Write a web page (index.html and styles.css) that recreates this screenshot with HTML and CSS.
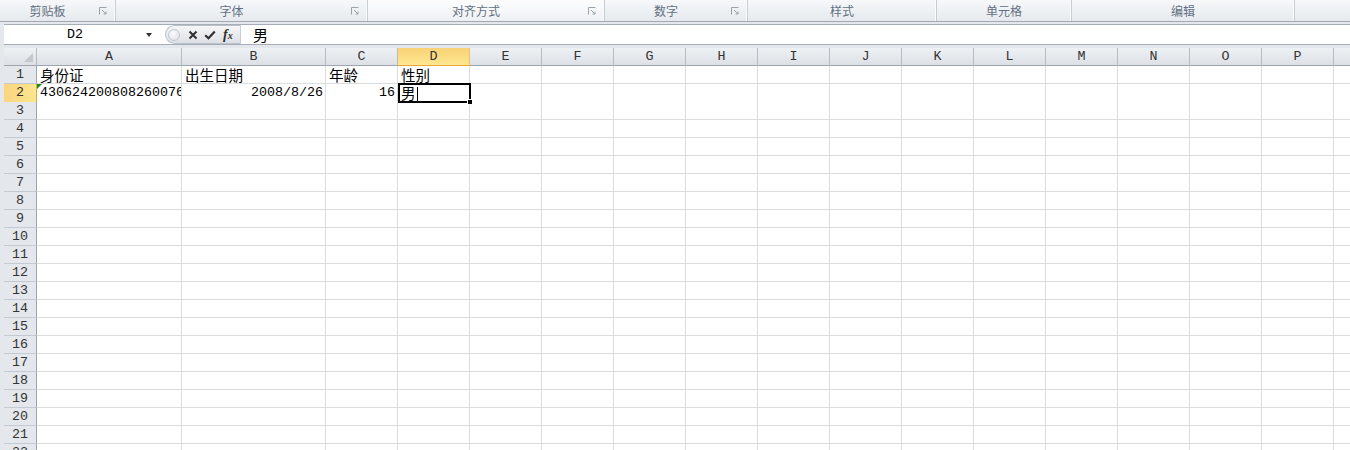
FILE: index.html
```html
<!DOCTYPE html>
<html lang="zh-CN">
<head>
    <meta charset="UTF-8">
    <meta name="viewport" content="width=device-width, initial-scale=1.0">
    <title>工作簿1 - Microsoft Excel</title>
    <link rel="stylesheet" href="styles.css">
</head>
<body>

<!-- 功能区分组标题 -->
<div class="ribbon">
    <div class="group g-clip"><span class="label">剪贴板</span><svg class="launcher" width="8" height="8" viewBox="0 0 8 8"><path d="M0.5 7.5V0.5H7.5" /><path d="M3 3L7 7M7 4.5V7H4.5" /></svg></div>
    <div class="group g-font"><span class="label">字体</span><svg class="launcher" width="8" height="8" viewBox="0 0 8 8"><path d="M0.5 7.5V0.5H7.5" /><path d="M3 3L7 7M7 4.5V7H4.5" /></svg></div>
    <div class="group g-align hover"><span class="label">对齐方式</span><svg class="launcher" width="8" height="8" viewBox="0 0 8 8"><path d="M0.5 7.5V0.5H7.5" /><path d="M3 3L7 7M7 4.5V7H4.5" /></svg></div>
    <div class="group g-num"><span class="label">数字</span><svg class="launcher" width="8" height="8" viewBox="0 0 8 8"><path d="M0.5 7.5V0.5H7.5" /><path d="M3 3L7 7M7 4.5V7H4.5" /></svg></div>
    <div class="group g-style"><span class="label">样式</span></div>
    <div class="group g-cells"><span class="label">单元格</span></div>
    <div class="group g-edit"><span class="label">编辑</span></div>
    <div class="group last"></div>
</div>

<!-- 编辑栏 -->
<div class="fbar">
    <div class="namebox"><span class="name">D2</span><span class="drop"></span></div>
    <div class="fbtns">
        <span class="grip"></span>
        <svg class="cancel" width="10" height="10" viewBox="0 0 10 10"><path d="M1.5 1.5L8.5 8.5M8.5 1.5L1.5 8.5" /></svg>
        <svg class="enter" width="12" height="10" viewBox="0 0 12 10"><path d="M1.2 5.2L4.5 8.3L10.8 1.5" /></svg>
        <span class="fx"><i>f</i><small>x</small></span>
    </div>
    <div class="formula">男</div>
</div>

<!-- 工作表 -->
<div class="sheet">
    <div class="row head"><span class="corner"><svg width="33" height="17" viewBox="0 0 33 17"><polygon points="29,5 29,14 20,14" /></svg></span><span>A</span><span>B</span><span>C</span><span class="sel">D</span><span>E</span><span>F</span><span>G</span><span>H</span><span>I</span><span>J</span><span>K</span><span>L</span><span>M</span><span>N</span><span>O</span><span>P</span><span></span></div>
    <div class="row"><span class="rh">1</span><span class="t">身份证</span><span class="t">出生日期</span><span class="t">年龄</span><span class="t">性别</span><span></span><span></span><span></span><span></span><span></span><span></span><span></span><span></span><span></span><span></span><span></span><span></span><span></span></div>
    <div class="row"><span class="rh sel">2</span><span class="err">430624200808260076</span><span class="num">2008/8/26</span><span class="num">16</span><span class="t active">男<i class="caret"></i><b class="box"><b class="handle"></b></b></span><span></span><span></span><span></span><span></span><span></span><span></span><span></span><span></span><span></span><span></span><span></span><span></span><span></span></div>
    <div class="row"><span class="rh">3</span><span></span><span></span><span></span><span></span><span></span><span></span><span></span><span></span><span></span><span></span><span></span><span></span><span></span><span></span><span></span><span></span><span></span></div>
    <div class="row"><span class="rh">4</span><span></span><span></span><span></span><span></span><span></span><span></span><span></span><span></span><span></span><span></span><span></span><span></span><span></span><span></span><span></span><span></span><span></span></div>
    <div class="row"><span class="rh">5</span><span></span><span></span><span></span><span></span><span></span><span></span><span></span><span></span><span></span><span></span><span></span><span></span><span></span><span></span><span></span><span></span><span></span></div>
    <div class="row"><span class="rh">6</span><span></span><span></span><span></span><span></span><span></span><span></span><span></span><span></span><span></span><span></span><span></span><span></span><span></span><span></span><span></span><span></span><span></span></div>
    <div class="row"><span class="rh">7</span><span></span><span></span><span></span><span></span><span></span><span></span><span></span><span></span><span></span><span></span><span></span><span></span><span></span><span></span><span></span><span></span><span></span></div>
    <div class="row"><span class="rh">8</span><span></span><span></span><span></span><span></span><span></span><span></span><span></span><span></span><span></span><span></span><span></span><span></span><span></span><span></span><span></span><span></span><span></span></div>
    <div class="row"><span class="rh">9</span><span></span><span></span><span></span><span></span><span></span><span></span><span></span><span></span><span></span><span></span><span></span><span></span><span></span><span></span><span></span><span></span><span></span></div>
    <div class="row"><span class="rh">10</span><span></span><span></span><span></span><span></span><span></span><span></span><span></span><span></span><span></span><span></span><span></span><span></span><span></span><span></span><span></span><span></span><span></span></div>
    <div class="row"><span class="rh">11</span><span></span><span></span><span></span><span></span><span></span><span></span><span></span><span></span><span></span><span></span><span></span><span></span><span></span><span></span><span></span><span></span><span></span></div>
    <div class="row"><span class="rh">12</span><span></span><span></span><span></span><span></span><span></span><span></span><span></span><span></span><span></span><span></span><span></span><span></span><span></span><span></span><span></span><span></span><span></span></div>
    <div class="row"><span class="rh">13</span><span></span><span></span><span></span><span></span><span></span><span></span><span></span><span></span><span></span><span></span><span></span><span></span><span></span><span></span><span></span><span></span><span></span></div>
    <div class="row"><span class="rh">14</span><span></span><span></span><span></span><span></span><span></span><span></span><span></span><span></span><span></span><span></span><span></span><span></span><span></span><span></span><span></span><span></span><span></span></div>
    <div class="row"><span class="rh">15</span><span></span><span></span><span></span><span></span><span></span><span></span><span></span><span></span><span></span><span></span><span></span><span></span><span></span><span></span><span></span><span></span><span></span></div>
    <div class="row"><span class="rh">16</span><span></span><span></span><span></span><span></span><span></span><span></span><span></span><span></span><span></span><span></span><span></span><span></span><span></span><span></span><span></span><span></span><span></span></div>
    <div class="row"><span class="rh">17</span><span></span><span></span><span></span><span></span><span></span><span></span><span></span><span></span><span></span><span></span><span></span><span></span><span></span><span></span><span></span><span></span><span></span></div>
    <div class="row"><span class="rh">18</span><span></span><span></span><span></span><span></span><span></span><span></span><span></span><span></span><span></span><span></span><span></span><span></span><span></span><span></span><span></span><span></span><span></span></div>
    <div class="row"><span class="rh">19</span><span></span><span></span><span></span><span></span><span></span><span></span><span></span><span></span><span></span><span></span><span></span><span></span><span></span><span></span><span></span><span></span><span></span></div>
    <div class="row"><span class="rh">20</span><span></span><span></span><span></span><span></span><span></span><span></span><span></span><span></span><span></span><span></span><span></span><span></span><span></span><span></span><span></span><span></span><span></span></div>
    <div class="row"><span class="rh">21</span><span></span><span></span><span></span><span></span><span></span><span></span><span></span><span></span><span></span><span></span><span></span><span></span><span></span><span></span><span></span><span></span><span></span></div>
    <div class="row"><span class="rh">22</span><span></span><span></span><span></span><span></span><span></span><span></span><span></span><span></span><span></span><span></span><span></span><span></span><span></span><span></span><span></span><span></span><span></span></div>
</div>

</body>
</html>
```

FILE: styles.css
```css
html, body {
    margin: 0;
    height: 100%;
    overflow: hidden;
}
body {
    background-color: #e4e8ec;
    font-family: "Liberation Mono", "Noto Sans CJK SC", monospace;
    font-size: 13px;
    color: #000;
}

/* 功能区 */
.ribbon {
    display: flex;
    height: 21px;
    border-bottom: 1px solid #a2a9b2;
    background: linear-gradient(#f6f8fa, #e6eaee);
    font-family: "Noto Sans CJK SC", sans-serif;
    font-size: 12px;
    color: #637083;
}
.group {
    display: flex;
    align-items: center;
    flex-shrink: 0;
    box-sizing: border-box;
    border-right: 1px solid #c6ccd3;
    box-shadow: inset -1px 0 #fbfcfd;
}
.group .label {
    flex: 1;
    text-align: center;
    line-height: 21px;
}
.group.hover {
    background: linear-gradient(#fdfdfe, #eef1f4);
}
.g-clip { width: 116px; }
.g-font { width: 252px; }
.g-align { width: 237px; }
.g-num { width: 143px; }
.g-style { width: 189px; }
.g-cells { width: 135px; }
.g-edit { width: 223px; }
.group.last {
    flex: 1;
    border-right: none;
    box-shadow: none;
}
.launcher {
    margin: 0 8px 0 4px;
    fill: none;
    stroke: #9aa2ac;
    stroke-width: 1;
}

/* 编辑栏 */
.fbar {
    display: flex;
    height: 19px;
    margin: 2px 0 3px 4px;
    background-color: #fff;
    border-top: 1px solid #a6adb6;
    border-bottom: 1px solid #a6adb6;
}
.namebox {
    display: flex;
    align-items: center;
    width: 156px;
    flex-shrink: 0;
}
.name {
    width: 142px;
    text-align: center;
    line-height: 19px;
    font-size: 13.33px;
}
.drop {
    border-left: 3.5px solid transparent;
    border-right: 3.5px solid transparent;
    border-top: 4px solid #333;
    margin-top: 1px;
}
.fbtns {
    display: flex;
    align-items: center;
    width: 75px;
    flex-shrink: 0;
    margin-left: 5px;
    box-sizing: border-box;
    border: 1px solid #bcc2ca;
    border-right: none;
    border-radius: 10px 0 0 10px;
    background: linear-gradient(#f5f6f8, #dde1e6);
}
.grip {
    width: 10px;
    height: 10px;
    margin-left: 2px;
    border: 1px solid #c3c8cf;
    border-radius: 50%;
    background: radial-gradient(circle at 40% 35%, #fdfdfe, #d9dde2);
}
.cancel {
    margin-left: 8px;
    fill: none;
    stroke: #2f2f2f;
    stroke-width: 2;
}
.enter {
    margin-left: 6px;
    fill: none;
    stroke: #2f2f2f;
    stroke-width: 2.2;
}
.fx {
    margin-left: 7px;
    font-family: "Liberation Serif", serif;
    font-weight: bold;
    font-size: 14px;
    color: #2f2f2f;
    line-height: 17px;
}
.fx small {
    font-size: 10px;
    font-style: italic;
}
.formula {
    flex: 1;
    border-left: 1px solid #c9ced5;
    padding-left: 12px;
    font-family: "Noto Sans CJK SC", sans-serif;
    font-size: 15px;
    line-height: 19px;
}

/* 工作表 */
.sheet {
    margin-left: 4px;
}
.row {
    display: grid;
    grid-template-columns: 33px 145px 144px repeat(15, 72px);
    height: 18px;
}
.row > span {
    position: relative;
    box-sizing: border-box;
    border-right: 1px solid #dadcdd;
    border-bottom: 1px solid #dadcdd;
    background-color: #fff;
    padding: 0 2px 0 3px;
    font-size: 13.33px;
    line-height: 17px;
    white-space: nowrap;
    overflow: hidden;
}
.row > .rh {
    padding: 0;
    text-align: center;
    color: #333;
    background-color: #e4e8ec;
    border-right-color: #9ea5ae;
    border-bottom-color: #c4cad1;
}
.row > .rh.sel {
    background: linear-gradient(to right, #f9d57e, #fde68e);
    border-right-color: #eba63a;
    border-bottom-color: #f0c15e;
}
.head > span {
    padding: 0;
    text-align: center;
    color: #333;
    background: linear-gradient(#eef1f4, #dde1e6);
    border-right-color: #b6bcc4;
    border-bottom-color: #9ea5ae;
}
.head > span.sel {
    background: linear-gradient(#f8d277, #fee78f);
    border-right-color: #f0c15e;
    border-bottom-color: #eba63a;
}
.corner svg {
    display: block;
    fill: #c3c8ce;
}
.row > .t {
    font-family: "Noto Sans CJK SC", sans-serif;
    font-size: 14.5px;
    overflow: visible;
}
.row > .num {
    text-align: right;
}
.row > .err::before {
    content: "";
    position: absolute;
    left: 0;
    top: 0;
    border-top: 5px solid #1b8a1b;
    border-right: 5px solid transparent;
}
.caret {
    display: inline-block;
    width: 1px;
    height: 15px;
    margin-left: 1px;
    vertical-align: -3px;
    background-color: #000;
}
.box {
    position: absolute;
    z-index: 5;
    left: 0;
    top: -1px;
    width: 73px;
    height: 20px;
    box-sizing: border-box;
    border: 2px solid #000;
}
.handle {
    position: absolute;
    right: -4px;
    bottom: -4px;
    width: 4px;
    height: 4px;
    background-color: #000;
    border: 1px solid #fff;
}
```
